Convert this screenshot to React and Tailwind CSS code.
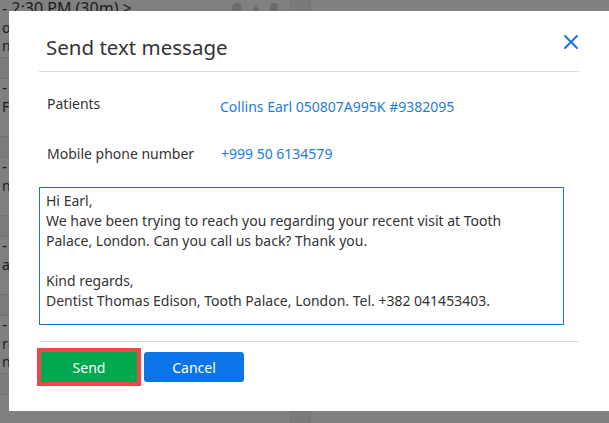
import React from "react";

const font = { fontFamily: '"Noto Sans", "Open Sans", sans-serif' };

// appointment list behind the dimmed overlay
const rows = [
    { time: "- 2:30 PM (30m) >", lines: ["on", "na"] },
    { time: "- 3", lines: ["Fa"] },
    { time: "- 6", lines: ["n"] },
    { time: "-", lines: ["ar"] },
    { time: "-", lines: ["ric", "na"] },
];

const message = [
    "Hi Earl,",
    "We have been trying to reach you regarding your recent visit at Tooth",
    "Palace, London. Can you call us back? Thank you.",
    "",
    "Kind regards,",
    "Dentist Thomas Edison, Tooth Palace, London. Tel. +382 041453403.",
];

const Background = () => (
    <div className="flex h-[423px] w-full bg-[#808080] overflow-hidden text-[#1c1c1c]">
        <div className="w-[291px] flex flex-col border-r border-[#767676]">
            {rows.map((row, i) => (
                <div key={i} className="flex flex-col">
                    <div className="h-[57px] pl-[2px] pr-3 flex flex-col text-[14px] leading-[17px]">
                        <div className="flex items-center justify-between text-[16px] leading-[20px] -mt-[2px]">
                            <span>{row.time}</span>
                            {i === 0 && (
                                <span className="flex gap-[8px] items-center text-[#6c6c6c] text-[12px]">
                                    <span className="w-[10px] h-[10px] rounded-full bg-[#6c6c6c]" />
                                    <span>▲</span>
                                    <span className="w-[8px] h-[10px] rounded-[2px] bg-[#6c6c6c]" />
                                </span>
                            )}
                        </div>
                        {row.lines.map((l, j) => (
                            <span key={j} className="mt-[1px]">{l}</span>
                        ))}
                    </div>
                    <div className="h-[22px] bg-[#7b7b7b] border-y border-[#737373]" />
                </div>
            ))}
        </div>
        <div className="w-[20px] bg-[#7a7a7a] border-r border-[#747474]" />
        <div className="flex-1 bg-[#818181]" />
    </div>
);

const CloseIcon = () => (
    <svg width="16" height="16" viewBox="0 0 16 16" fill="none" stroke="#1a73e8" strokeWidth="2" strokeLinecap="round">
        <path d="M2 2 L14 14 M14 2 L2 14" />
    </svg>
);

export default function App() {
    return (
        <div className="relative w-[609px] h-[423px] overflow-hidden" style={font}>
            <Background />

            <div className="absolute left-[9px] top-[11px] w-[600px] h-[400px] bg-white px-[30px]">
                {/* header */}
                <div className="flex justify-between items-start pt-[22px] pb-[10px] border-b border-[#dcdcdc]">
                    <h2 className="pl-[7px] text-[20.5px] leading-[28px] text-[#333]">Send text message</h2>
                    <button className="mt-[1px]">
                        <CloseIcon />
                    </button>
                </div>

                {/* patient details */}
                <div className="flex pl-[8px] pt-[22px] text-[14px] leading-[20px]">
                    <span className="w-[173px] text-[#333]">Patients</span>
                    <span className="mt-[3px] text-[#1b7be6]">Collins Earl 050807A995K #9382095</span>
                </div>
                <div className="flex pl-[8px] pt-[27px] text-[14px] leading-[20px]">
                    <span className="w-[174px] text-[#333]">Mobile phone number</span>
                    <span className="text-[#1b7be6]">+999 50 6134579</span>
                </div>

                <div className="mt-[23px] w-[525px] h-[138px] border border-[#1a73e8] px-[6px] pt-[3px] text-[14px] leading-[20px] text-[#333]">
                    {message.map((line, i) => (
                        <div key={i} className="h-[20px] whitespace-nowrap">{line}</div>
                    ))}
                </div>

                <div className="mt-[16px] border-t border-[#d6dbe2]" />

                {/* actions */}
                <div className="flex gap-[7px] pl-[2px] pt-[10px]">
                    <button className="w-[96px] h-[30px] bg-[#00a84f] text-white text-[14px] outline-4 outline-[#ef4649]">
                        Send
                    </button>
                    <button className="w-[100px] h-[30px] rounded-[3px] bg-[#0b74e6] text-white text-[14px]">
                        Cancel
                    </button>
                </div>
            </div>
        </div>
    );
}
